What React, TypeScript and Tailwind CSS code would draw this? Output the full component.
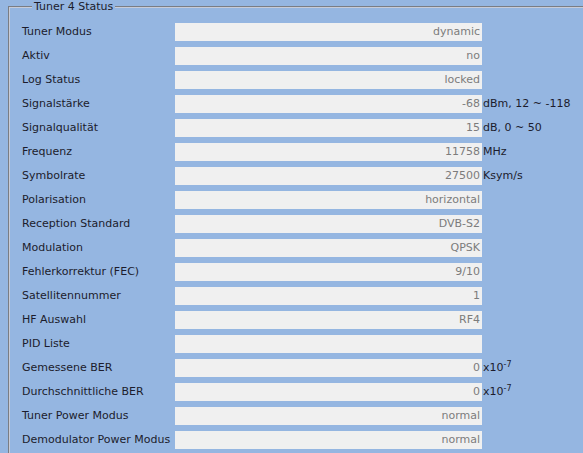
const rows: { label: string; value: string; unit?: string; exp?: boolean }[] = [
  { label: 'Tuner Modus', value: 'dynamic' },
  { label: 'Aktiv', value: 'no' },
  { label: 'Log Status', value: 'locked' },
  { label: 'Signalstärke', value: '-68', unit: 'dBm, 12 ~ -118' },
  { label: 'Signalqualität', value: '15', unit: 'dB, 0 ~ 50' },
  { label: 'Frequenz', value: '11758', unit: 'MHz' },
  { label: 'Symbolrate', value: '27500', unit: 'Ksym/s' },
  { label: 'Polarisation', value: 'horizontal' },
  { label: 'Reception Standard', value: 'DVB-S2' },
  { label: 'Modulation', value: 'QPSK' },
  { label: 'Fehlerkorrektur (FEC)', value: '9/10' },
  { label: 'Satellitennummer', value: '1' },
  { label: 'HF Auswahl', value: 'RF4' },
  { label: 'PID Liste', value: '' },
  { label: 'Gemessene BER', value: '0', exp: true },
  { label: 'Durchschnittliche BER', value: '0', exp: true },
  { label: 'Tuner Power Modus', value: 'normal' },
  { label: 'Demodulator Power Modus', value: 'normal' },
];

export default function App() {
  return (
    <div
      className="w-[583px] h-[453px] overflow-hidden bg-[#95b6e1] text-[11px] text-[#1c1c2c]"
      style={{ fontFamily: '"DejaVu Sans", Tahoma, sans-serif' }}
    >
      <fieldset className="ml-[8px] mt-0 w-[640px] border-2 [border-style:groove] border-[#c8ccd8] pl-[12px] pt-[10px] pb-4">
        <legend className="ml-[10px] px-[2px] leading-[13px]">Tuner 4 Status</legend>
        <div className="flex flex-col gap-[6px]">
          {rows.map((r) => (
            <div key={r.label} className="flex items-center h-[18px]">
              <div className="w-[153px] shrink-0 whitespace-nowrap">{r.label}</div>
              <div className="w-[307px] h-[18px] bg-[#f0f0f0] text-[#7c7c7c] text-right pr-[2px] leading-[18px]">
                {r.value}
              </div>
              {r.unit && <span className="ml-[1px] whitespace-nowrap">{r.unit}</span>}
              {r.exp && (
                <span className="ml-[1px] whitespace-nowrap">
                  x10<sup className="text-[8px] -top-[4px]">-7</sup>
                </span>
              )}
            </div>
          ))}
        </div>
      </fieldset>
    </div>
  );
}
